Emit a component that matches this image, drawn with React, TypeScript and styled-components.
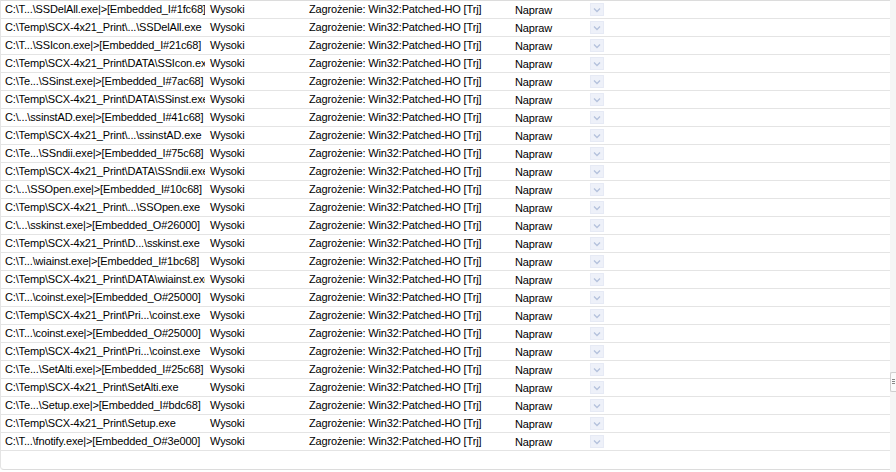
import React from "react";
import styled, { createGlobalStyle } from "styled-components";

const Global = createGlobalStyle`
  html, body { margin: 0; padding: 0; background: #ffffff; }
  body { width: 896px; height: 472px; overflow: hidden; }
`;

const Frame = styled.div`
  position: relative;
  width: 896px;
  height: 472px;
  box-sizing: border-box;
  background: #fff;
  font-family: "Liberation Sans", Arial, sans-serif;
  font-size: 11px;
  letter-spacing: -0.15px;
  color: #000;
`;

const Panel = styled.div`
  width: 890px;
  height: 470px;
  box-sizing: border-box;
  border-top: 1px solid #dcdcdc;
  border-bottom: 1px solid #dcdcdc;
  border-left: 1px solid #e4e4e4;
  border-radius: 0 0 0 4px;
  display: flex;
  flex-direction: column;
`;

const Row = styled.div`
  display: grid;
  grid-template-columns: 204px 100px 206px 79px 20px 1fr;
  align-items: center;
  height: 18px;
  box-sizing: border-box;
  border-bottom: 1px solid #e4e4e4;
`;

const Cell = styled.div<{ $pad?: number; $drop?: number }>`
  padding-left: ${(p) => p.$pad ?? 4}px;
  padding-top: ${(p) => p.$drop ?? 0}px;
  white-space: nowrap;
  overflow: hidden;
  line-height: 17px;
`;

const Drop = styled.div`
  width: 14px;
  height: 13px;
  box-sizing: border-box;
  background: #eef1f9;
  border: 1px solid #e6eaf5;
  display: flex;
  align-items: center;
  justify-content: center;
`;

const Scrollbar = styled.div`
  position: absolute;
  right: 0;
  top: 0;
  width: 6px;
  height: 472px;
  background: #f5f5f5;
`;

const Thumb = styled.div`
  position: absolute;
  right: 0;
  top: 372px;
  width: 5px;
  height: 18px;
  border: 1px solid #cfcfcf;
  border-right: none;
  border-radius: 2px 0 0 2px;
  background: #fafafa;
`;

const Grip = styled.div`
  position: absolute;
  left: 1px;
  top: 6px;
  width: 3px;
  height: 5px;
  background: repeating-linear-gradient(#888 0 1px, transparent 1px 2px);
`;

const rows: string[] = [
  "C:\\T...\\SSDelAll.exe|>[Embedded_I#1fc68]",
  "C:\\Temp\\SCX-4x21_Print\\...\\SSDelAll.exe",
  "C:\\T...\\SSIcon.exe|>[Embedded_I#21c68]",
  "C:\\Temp\\SCX-4x21_Print\\DATA\\SSIcon.exe",
  "C:\\Te...\\SSinst.exe|>[Embedded_I#7ac68]",
  "C:\\Temp\\SCX-4x21_Print\\DATA\\SSinst.exe",
  "C:\\...\\ssinstAD.exe|>[Embedded_I#41c68]",
  "C:\\Temp\\SCX-4x21_Print\\...\\ssinstAD.exe",
  "C:\\Te...\\SSndii.exe|>[Embedded_I#75c68]",
  "C:\\Temp\\SCX-4x21_Print\\DATA\\SSndii.exe",
  "C:\\...\\SSOpen.exe|>[Embedded_I#10c68]",
  "C:\\Temp\\SCX-4x21_Print\\...\\SSOpen.exe",
  "C:\\...\\sskinst.exe|>[Embedded_O#26000]",
  "C:\\Temp\\SCX-4x21_Print\\D...\\sskinst.exe",
  "C:\\T...\\wiainst.exe|>[Embedded_I#1bc68]",
  "C:\\Temp\\SCX-4x21_Print\\DATA\\wiainst.exe",
  "C:\\T...\\coinst.exe|>[Embedded_O#25000]",
  "C:\\Temp\\SCX-4x21_Print\\Pri...\\coinst.exe",
  "C:\\T...\\coinst.exe|>[Embedded_O#25000]",
  "C:\\Temp\\SCX-4x21_Print\\Pri...\\coinst.exe",
  "C:\\Te...\\SetAlti.exe|>[Embedded_I#25c68]",
  "C:\\Temp\\SCX-4x21_Print\\SetAlti.exe",
  "C:\\Te...\\Setup.exe|>[Embedded_I#bdc68]",
  "C:\\Temp\\SCX-4x21_Print\\Setup.exe",
  "C:\\T...\\fnotify.exe|>[Embedded_O#3e000]",
];

const Chevron = () => (
  <svg width="8" height="6" viewBox="0 0 8 6">
    <path d="M1 1.5 L4 4.5 L7 1.5" fill="none" stroke="#b4c1dc" strokeWidth="1.3" />
  </svg>
);

export default function App() {
  return (
    <Frame>
      <Global />
      <Panel>
        {rows.map((r, i) => (
          <Row key={i}>
            <Cell $pad={4}>{r}</Cell>
            <Cell $pad={5}>Wysoki</Cell>
            <Cell $pad={4}>Zagrożenie: Win32:Patched-HO [Trj]</Cell>
            <Cell $pad={4} $drop={1}>Napraw</Cell>
            <Drop>
              <Chevron />
            </Drop>
            <div />
          </Row>
        ))}
      </Panel>
      <Scrollbar>
        <Thumb>
          <Grip />
        </Thumb>
      </Scrollbar>
    </Frame>
  );
}
